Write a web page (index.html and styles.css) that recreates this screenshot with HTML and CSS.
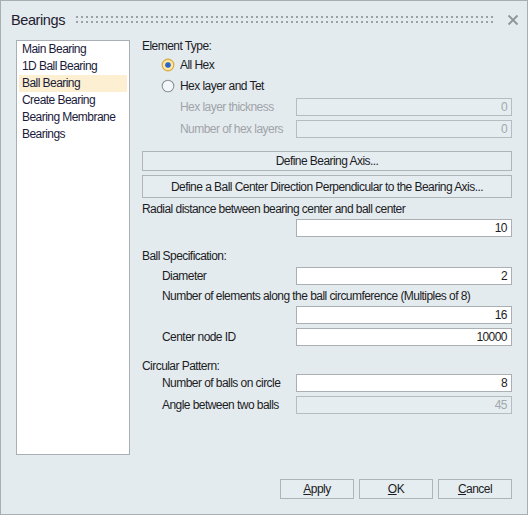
FILE: index.html
```html
<!DOCTYPE html>
<html>
<head>
<meta charset="utf-8">
<link rel="stylesheet" href="styles.css">
</head>
<body>
<div class="window">
  <div class="titlebar">
    <span class="title">Bearings</span>
    <span class="grip"></span>
    <svg class="close" width="12" height="12" viewBox="0 0 12 12"><path d="M1.5 1.5 L10.5 10.5 M10.5 1.5 L1.5 10.5" stroke="#8e9599" stroke-width="1.8" fill="none"/></svg>
  </div>
  <div class="main">
    <div class="list">
      <div class="item">Main Bearing</div>
      <div class="item">1D Ball Bearing</div>
      <div class="item selected">Ball Bearing</div>
      <div class="item">Create Bearing</div>
      <div class="item">Bearing Membrane</div>
      <div class="item">Bearings</div>
    </div>
    <div class="panel">
      <div class="row r-label top">Element Type:</div>
      <div class="row r-radio">
        <svg class="radio" width="14" height="14" viewBox="0 0 14 14"><circle cx="7" cy="7" r="5.8" fill="#fbe8a9" stroke="#dba93a" stroke-width="1.2"/><circle cx="7" cy="7" r="2.8" fill="#2b63c6"/></svg>
        <span>All Hex</span>
      </div>
      <div class="row r-radio">
        <svg class="radio" width="14" height="14" viewBox="0 0 14 14"><circle cx="7" cy="7" r="5.8" fill="#f4f7f9" stroke="#8d9397" stroke-width="1.1"/></svg>
        <span>Hex layer and Tet</span>
      </div>
      <div class="row field sub2 disabled first">
        <span class="flabel">Hex layer thickness</span>
        <span class="input">0</span>
      </div>
      <div class="row field sub2 disabled">
        <span class="flabel">Number of hex layers</span>
        <span class="input">0</span>
      </div>
      <div class="btn wide b1">Define Bearing Axis...</div>
      <div class="btn wide b2">Define a Ball Center Direction Perpendicular to the Bearing Axis...</div>
      <div class="row r-label m4">Radial distance between bearing center and ball center</div>
      <div class="row field solo"><span class="input">10</span></div>
      <div class="row r-label m12">Ball Specification:</div>
      <div class="row field sub1">
        <span class="flabel">Diameter</span>
        <span class="input">2</span>
      </div>
      <div class="row r-label sub1 m4">Number of elements along the ball circumference (Multiples of 8)</div>
      <div class="row field solo"><span class="input">16</span></div>
      <div class="row field sub1">
        <span class="flabel">Center node ID</span>
        <span class="input">10000</span>
      </div>
      <div class="row r-label m13">Circular Pattern:</div>
      <div class="row field sub1 m1">
        <span class="flabel">Number of balls on circle</span>
        <span class="input">8</span>
      </div>
      <div class="row field sub1">
        <span class="flabel">Angle between two balls</span>
        <span class="input off">45</span>
      </div>
    </div>
  </div>
  <div class="footer">
    <div class="btn small"><u>A</u>pply</div>
    <div class="btn small"><u>O</u>K</div>
    <div class="btn small"><u>C</u>ancel</div>
  </div>
</div>
</body>
</html>
```

FILE: styles.css
```css
html, body {
  margin: 0;
  padding: 0;
  background: #e4ebef;
}
body {
  font-family: "Liberation Sans", Arial, sans-serif;
  font-size: 12px;
  letter-spacing: -0.55px;
  color: #1c1c24;
}
.window {
  width: 528px;
  height: 515px;
  box-sizing: border-box;
  border: 1px solid #a8afb3;
  background: #e4ebef;
  display: flex;
  flex-direction: column;
}
.titlebar {
  height: 39px;
  display: flex;
  align-items: center;
  padding-left: 10px;
  padding-right: 8px;
  box-sizing: border-box;
  padding-bottom: 1px;
}
.title {
  font-size: 14.5px;
  letter-spacing: -0.4px;
  color: #1e2030;
  line-height: 20px;
}
.grip {
  flex: 1;
  height: 7px;
  margin-left: 11px;
  margin-right: 11px;
  margin-bottom: 2px;
  background-image:
    repeating-linear-gradient(90deg, #9ba1a5 0 2px, transparent 2px 5px),
    repeating-linear-gradient(90deg, #9ba1a5 0 2px, transparent 2px 5px);
  background-size: 100% 2px, 100% 2px;
  background-position: 0 0, 0 5px;
  background-repeat: no-repeat;
}
.close {
  display: block;
}
.main {
  height: 415px;
  display: flex;
  padding-left: 15px;
}
.list {
  width: 114px;
  height: 415px;
  box-sizing: border-box;
  border: 1px solid #a9afb3;
  background: #ffffff;
  padding: 0 2px;
}
.item {
  height: 17px;
  line-height: 17px;
  padding-left: 3px;
  color: #1a1a3a;
  white-space: nowrap;
}
.item.selected {
  background: #fdf0d2;
}
.panel {
  margin-left: 12px;
  width: 370px;
  display: flex;
  flex-direction: column;
}
.row {
  display: flex;
  align-items: center;
  white-space: nowrap;
}
.r-label {
  height: 14px;
  line-height: 14px;
}
.r-label.top {
  height: 13px;
  line-height: 13px;
}
.r-radio {
  height: 18px;
  margin-top: 3px;
  padding-left: 19px;
}
.radio {
  display: block;
  margin-right: 5px;
}
.field {
  height: 18px;
  margin-top: 4px;
}
.field.first {
  margin-top: 3px;
}
.sub1 { padding-left: 20px; }
.sub2 { padding-left: 38px; }
.flabel {
  flex: 1;
}
.input {
  width: 216px;
  height: 18px;
  box-sizing: border-box;
  border: 1px solid #a9afb3;
  background: #ffffff;
  text-align: right;
  padding-right: 4px;
  line-height: 16px;
  margin-left: auto;
}
.solo {
  margin-top: 3px;
}
.disabled .flabel { color: #9fa4a8; }
.disabled .input,
.input.off {
  background: #e6edf1;
  border-color: #b6bcc0;
  color: #a2a7ab;
}
.btn {
  box-sizing: border-box;
  border: 1px solid #aeb4b8;
  background: #e6edf1;
  text-align: center;
  display: flex;
  align-items: center;
  justify-content: center;
  white-space: nowrap;
}
.b1 { height: 20px; margin-top: 13px; }
.b2 { height: 23px; margin-top: 4px; }
.m4 { margin-top: 4px; }
.m12 { margin-top: 12px; }
.m13 { margin-top: 13px; }
.m1 { margin-top: 1px; }
.footer {
  display: flex;
  justify-content: flex-end;
  gap: 5px;
  padding-top: 24px;
  padding-right: 15px;
}
.btn.small {
  width: 74px;
  height: 20px;
}
u {
  text-decoration: underline;
  text-underline-offset: 1px;
}
```
